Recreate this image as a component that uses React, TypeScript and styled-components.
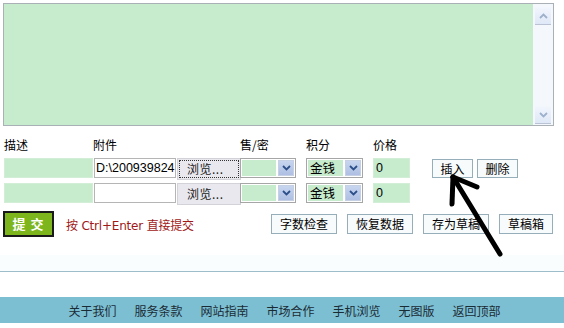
import styled, { createGlobalStyle } from "styled-components";

const GlobalStyle = createGlobalStyle`
  html, body {
    margin: 0;
    padding: 0;
    background: #ffffff;
  }
  body {
    font-family: "Noto Sans CJK SC", "DejaVu Sans", sans-serif;
    font-size: 12px;
    color: #000;
  }
`;

const footerLinks = ["关于我们", "服务条款", "网站指南", "市场合作", "手机浏览", "无图版", "返回顶部"];
const toolButtons = ["字数检查", "恢复数据", "存为草稿", "草稿箱"];

const Chevron = ({ up, color }: { up?: boolean; color: string }) => (
  <svg width="9" height="6" viewBox="0 0 9 6">
    <path
      d={up ? "M1 5 L4.5 1.5 L8 5" : "M1 1 L4.5 4.5 L8 1"}
      fill="none"
      stroke={color}
      strokeWidth="1.8"
    />
  </svg>
);

const Editor = () => (
  <EditorBox>
    <EditArea />
    <ScrollTrack>
      <ScrollButton>
        <Chevron up color="#9db0cc" />
      </ScrollButton>
      <ScrollButton>
        <Chevron color="#9db0cc" />
      </ScrollButton>
    </ScrollTrack>
  </EditorBox>
);

const Select = ({ value, width }: { value?: string; width: number }) => (
  <SelectBox $width={width}>
    <SelectValue>{value}</SelectValue>
    <SelectArrow>
      <Chevron color="#2c4f8a" />
    </SelectArrow>
  </SelectBox>
);

const AttachRow = ({ file, focused }: { file?: string; focused?: boolean }) => (
  <>
    <DescInput />
    <AttachInput>{file}</AttachInput>
    <BrowseButton>
      <BrowseLabel $focused={focused}>浏览...</BrowseLabel>
    </BrowseButton>
    <Select width={58} />
    <Select width={59} value="金钱" />
    <PriceInput>0</PriceInput>
    <RowActions>
      {focused && (
        <>
          <SmallButton>插入</SmallButton>
          <SmallButton>删除</SmallButton>
        </>
      )}
    </RowActions>
  </>
);

const App = () => {
  return (
    <Page>
      <GlobalStyle />
      <Editor />
      <FormGrid>
        <Label>描述</Label>
        <Label $shift={-1}>附件</Label>
        <span />
        <Label>售/密</Label>
        <Label>积分</Label>
        <Label>价格</Label>
        <span />
        <AttachRow file="D:\200939824" focused />
        <AttachRow />
      </FormGrid>
      <SubmitRow>
        <SubmitButton>提 交</SubmitButton>
        <Hint>按 Ctrl+Enter 直接提交</Hint>
        <ToolButtons>
          {toolButtons.map((t) => (
            <ToolButton key={t}>{t}</ToolButton>
          ))}
        </ToolButtons>
      </SubmitRow>
      <Divider />
      <Footer>
        {footerLinks.map((l) => (
          <FooterLink key={l}>{l}</FooterLink>
        ))}
      </Footer>
      <ArrowMark width="564" height="328" viewBox="0 0 564 328">
        <g stroke="#000" strokeWidth="5" strokeLinecap="round" fill="none">
          <path d="M453 177 L500 254" />
          <path d="M453 177 L452 204" />
          <path d="M453 177 L477 187" />
        </g>
      </ArrowMark>
    </Page>
  );
};

const Page = styled.div`
  position: relative;
  width: 564px;
  height: 328px;
  overflow: hidden;
  display: flex;
  flex-direction: column;
`;

const EditorBox = styled.div`
  margin: 3px 0 0 3px;
  width: 549px;
  height: 121px;
  border: 1px solid #a9b0b6;
  display: flex;
`;

const EditArea = styled.textarea`
  flex: 1;
  border: none;
  margin: 0;
  padding: 0;
  resize: none;
  outline: none;
  background: #c7ebcd;
`;

const ScrollTrack = styled.div`
  width: 20px;
  background: #f4f8fd;
  display: flex;
  flex-direction: column;
  justify-content: space-between;
  align-items: center;
  padding: 3px 0 1px;
`;

const ScrollButton = styled.div`
  width: 16px;
  height: 17px;
  background: linear-gradient(#f2f6fd, #dfe8f7);
  border-bottom: 1px solid #b9c3d3;
  display: flex;
  align-items: center;
  justify-content: center;
`;

const FormGrid = styled.div`
  display: grid;
  grid-template-columns: 90px 82px 64px 66px 67px 59px auto;
  grid-template-rows: 14px 20px 20px;
  row-gap: 5px;
  padding-left: 4px;
  margin-top: 12px;
  & > :nth-child(7) ~ * {
    margin-top: 1px;
  }
`;

const Label = styled.div<{ $shift?: number }>`
  line-height: 14px;
  margin-left: ${(p) => p.$shift ?? 0}px;
  margin-bottom: 1px;
`;

const DescInput = styled.div`
  width: 87px;
  height: 18px;
  background: #c7ebcd;
  border: 1px solid #d2eed7;
`;

const AttachInput = styled.div`
  width: 79px;
  height: 18px;
  border: 1px solid #b5b5b5;
  background: #fff;
  font-family: "Liberation Sans", Arial, sans-serif;
  font-size: 12.5px;
  line-height: 18px;
  padding-left: 1px;
  box-sizing: content-box;
  overflow: hidden;
  white-space: nowrap;
`;

const BrowseButton = styled.div`
  width: 60px;
  height: 18px;
  margin-left: 1px;
  background: #e8e8ee;
  border: 1px solid #d2d2d8;
  display: flex;
  padding: 1px;
  box-sizing: content-box;
  margin-top: -1px;
`;

const BrowseLabel = styled.div<{ $focused?: boolean }>`
  flex: 1;
  border: 1px dotted ${(p) => (p.$focused ? "#333" : "transparent")};
  text-align: left;
  padding-left: 7px;
  line-height: 16px;
  color: #222;
  letter-spacing: 0.5px;
`;

const SelectBox = styled.div<{ $width: number }>`
  width: ${(p) => p.$width - 2}px;
  border: 1px solid #a6a6a6;
  background: #fff;
  display: flex;
  padding: 1px;
  box-sizing: border-box;
  height: 20px;
`;

const SelectValue = styled.div`
  flex: 1;
  background: #c7ebcd;
  line-height: 16px;
  padding-left: 2px;
  font-size: 12.5px;
`;

const SelectArrow = styled.div`
  width: 16px;
  margin-left: 2px;
  background: linear-gradient(#c7d5ef, #aebfe3);
  border: 1px solid #c5d0e4;
  box-sizing: border-box;
  display: flex;
  align-items: center;
  justify-content: center;
`;

const PriceInput = styled.div`
  width: 33px;
  height: 18px;
  background: #c7ebcd;
  border: 1px solid #d2eed7;
  font-family: "Liberation Sans", Arial, sans-serif;
  font-size: 12.5px;
  line-height: 18px;
  padding-left: 2px;
  box-sizing: content-box;
`;

const RowActions = styled.div`
  display: flex;
  gap: 4px;
  align-items: center;
`;

const SmallButton = styled.div`
  width: 39px;
  height: 17px;
  border: 1px solid #95aeb9;
  background: #f8fbfc;
  text-align: center;
  line-height: 17px;
  margin-top: 2px;
`;

const SubmitRow = styled.div`
  display: flex;
  align-items: center;
  margin-top: 9px;
  padding: 0 11px 0 3px;
`;

const SubmitButton = styled.div`
  width: 47px;
  height: 22px;
  background: #7db61c;
  border: 2px solid #1a1a1a;
  color: #fff;
  font-weight: bold;
  font-size: 13px;
  text-align: center;
  line-height: 22px;
  letter-spacing: 1px;
`;

const Hint = styled.div`
  margin-left: 12px;
  color: #a01818;
  font-size: 12px;
  font-family: "DejaVu Sans", "Noto Sans CJK SC", sans-serif;
  letter-spacing: -0.2px;
`;

const ToolButtons = styled.div`
  margin-left: auto;
  display: flex;
  gap: 10px;
`;

const ToolButton = styled.div`
  height: 18px;
  padding: 0 8px;
  border: 1px solid #95aeb9;
  background: #f8fbfc;
  line-height: 18px;
`;

const Divider = styled.div`
  margin-top: 18px;
  height: 16px;
  background: #fafdfd;
  border-bottom: 1px solid #9dbdcb;
`;

const Footer = styled.div`
  margin-top: 25px;
  height: 26px;
  background: #7cbfd3;
  display: flex;
  align-items: center;
  justify-content: center;
  gap: 18px;
  padding-left: 5px;
`;

const FooterLink = styled.span`
  color: #1b2b33;
  font-size: 12px;
`;

const ArrowMark = styled.svg`
  position: absolute;
  left: 0;
  top: 0;
  pointer-events: none;
`;

export default App;
